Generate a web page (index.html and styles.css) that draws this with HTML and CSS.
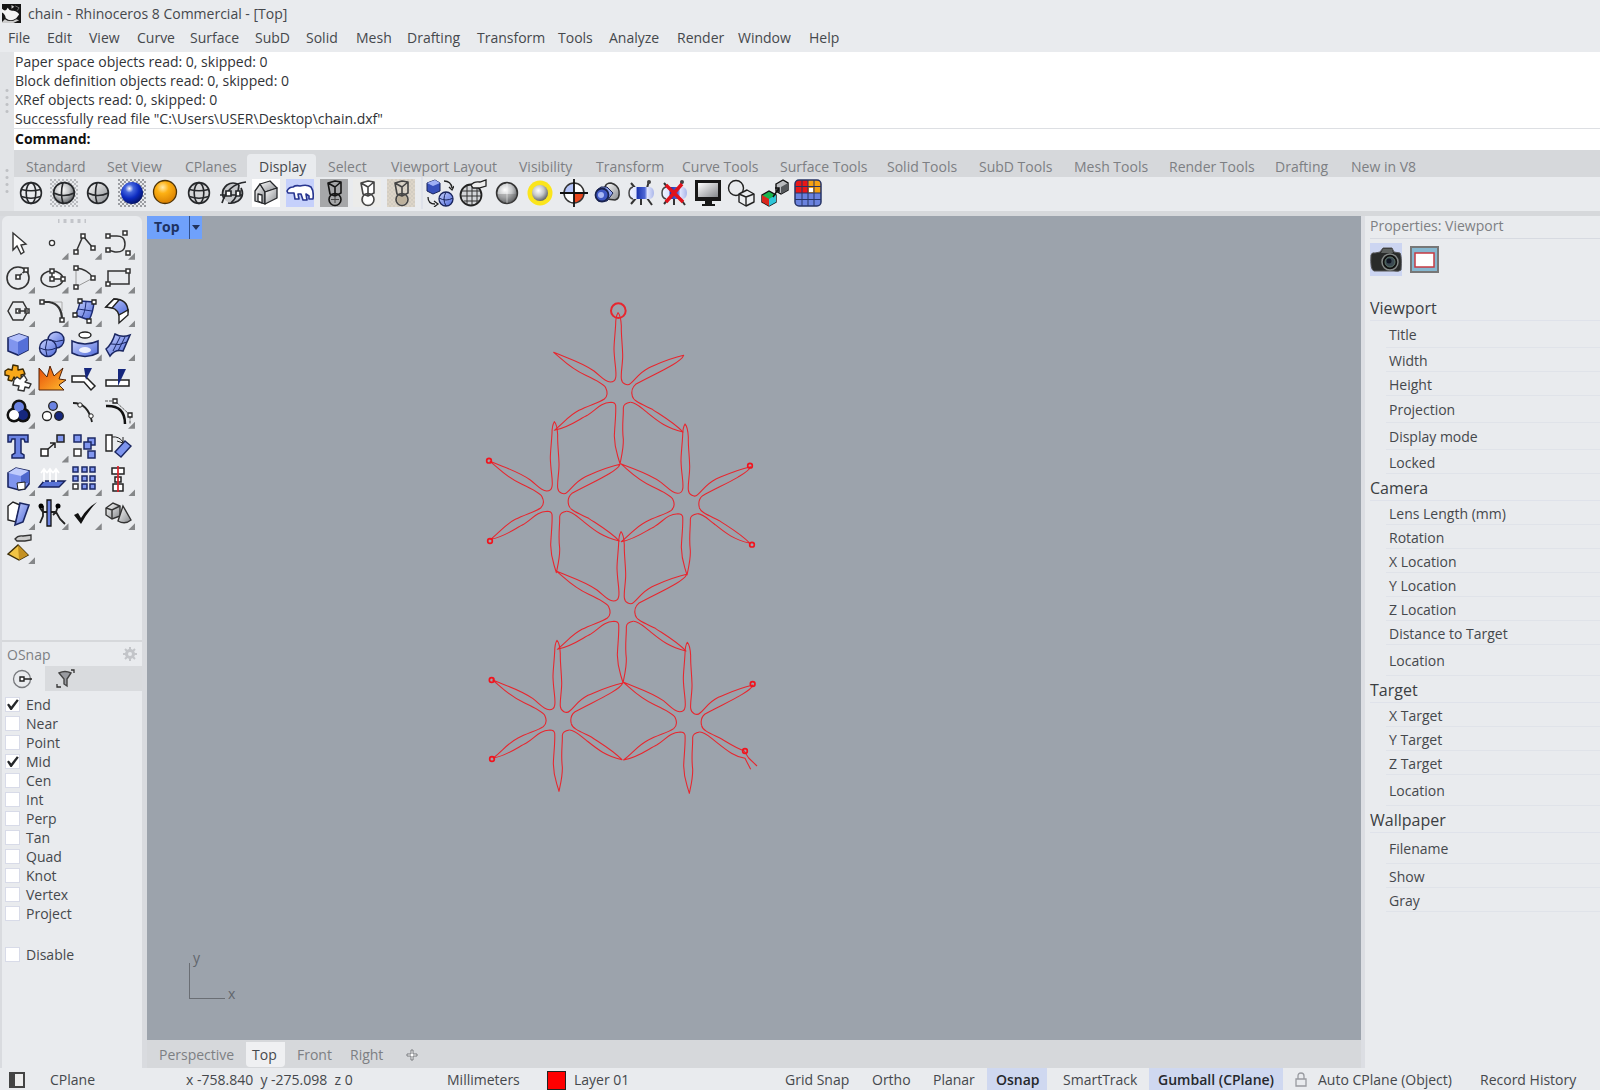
FILE: index.html
```html
<!DOCTYPE html>
<html lang="en">
<head>
<meta charset="utf-8">
<title>chain - Rhinoceros 8 Commercial - [Top]</title>
<link rel="stylesheet" href="styles.css">
</head>
<body>
<svg class="defs" aria-hidden="true">
  <defs>
    <radialGradient id="g-gray" cx=".4" cy=".35" r=".7"><stop offset="0" stop-color="#fff"/><stop offset=".5" stop-color="#c4c6c8"/><stop offset="1" stop-color="#55585c"/></radialGradient>
    <radialGradient id="g-blue" cx=".38" cy=".3" r=".75"><stop offset="0" stop-color="#fff"/><stop offset=".25" stop-color="#4566dd"/><stop offset=".6" stop-color="#0c2abf"/><stop offset="1" stop-color="#04105c"/></radialGradient>
    <radialGradient id="g-orange" cx=".4" cy=".3" r=".75"><stop offset="0" stop-color="#ffe9a8"/><stop offset=".35" stop-color="#fdb114"/><stop offset="1" stop-color="#d67c00"/></radialGradient>
    <linearGradient id="g-soft" x1="0" y1="0" x2="1" y2="1"><stop offset="0" stop-color="#c8d2ff"/><stop offset="1" stop-color="#4d68d8"/></linearGradient>
    <linearGradient id="g-steel" x1="0" y1="0" x2="1" y2="1"><stop offset="0" stop-color="#fff"/><stop offset="1" stop-color="#85888c"/></linearGradient>
    <linearGradient id="g-fire" x1="0" y1="0" x2="1" y2="1"><stop offset="0" stop-color="#e84a08"/><stop offset="1" stop-color="#ffbd2e"/></linearGradient>
    <linearGradient id="g-lens" x1="0" y1="0" x2="1" y2="0"><stop offset="0" stop-color="#f4f6ff"/><stop offset=".3" stop-color="#dfe5ff"/><stop offset=".36" stop-color="#1c35b0"/><stop offset=".65" stop-color="#4e67d6"/><stop offset=".75" stop-color="#dfe4fc"/><stop offset="1" stop-color="#aab6ea"/></linearGradient>
    <pattern id="p-dots" width="4" height="4" patternUnits="userSpaceOnUse"><path d="M0 0H2V2H0ZM2 2H4V4H2Z" fill="#9b9da2"/></pattern>
    <g id="globe" fill="none" stroke="#26282b" stroke-width="1.6"><circle cx="14" cy="14" r="10.4"/><ellipse cx="14" cy="14" rx="4.8" ry="10.4"/><path d="M4.5 10.5Q14 13 23.500 10.500M4.500 17.500Q14 21 23.500 17.500"/></g>
    <g id="cross" fill="none" stroke="#26282b" stroke-width="1.6"><circle cx="14" cy="14" r="10.400"/><path d="M13 3.700Q10 14 13 24.300M3.700 14Q14 19 24.300 14"/></g>
    <g id="pen" fill="none" stroke-linejoin="round" stroke-width="1.600"><path d="M8 4L15 2L21 3L15 8Z M8 4L10 15L15 17L21 14V3 M15 8V16"/><circle cx="15" cy="20.500" r="6"/></g>
    <g id="cam"><path d="M9 10L4 4M20 9L22 2M9 19L4 25M20 19L25 26M14 20V26" stroke="#333" stroke-width="2"/><path d="M5 8H23Q27 9 27 14T23 20H5Q1 19 1 14T5 8Z" fill="url(#g-lens)"/><path d="M6 8Q2 9 2 14T6 20" fill="none" stroke="#444" stroke-width="1.500"/><circle cx="22" cy="3" r="2" fill="#444"/></g>

    <path id="star-body" d="M40 10C36 -5 38 -15 50 -25C80 -42 130 -65 155 -80C175 -92 190 -100 194 -112C150 -102 130 -92 90 -75C60 -60 50 -40 35 -28C25 -18 8 -28 7 -42C5 -60 12 -90 11 -115C10 -150 6 -175 7 -200C6 -220 2 -235 -3 -240C-8 -232 -10 -225 -10 -205C-12 -170 -15 -150 -15 -130C-14 -90 -6 -60 -10 -45Q-12 -32 -26 -32C-45 -34 -55 -50 -75 -65C-110 -90 -140 -98 -196 -121C-170 -100 -150 -75 -100 -52C-70 -38 -45 -25 -40 -15C-34 -3 -34 10 -44 19C-60 30 -90 38 -120 53C-150 68 -165 90 -194 113C-150 105 -120 80 -95 68C-65 50 -60 32 -24 29Q-12 29 -10 38C-8 60 -13 100 -14 130C-13 170 -8 175 3 213C10 180 14 165 13 140C8 100 14 70 13 45Q14 32 34 29"/>
    <g id="star"><use href="#star-body"/><path d="M34 29C50 28 65 45 85 60C120 88 140 105 192 118C165 90 130 70 100 50C70 35 42 25 40 10"/></g>
  </defs>
</svg>

<div class="app">
  <header class="title-bar">
    <svg class="logo" viewBox="0 0 20 20"><rect width="20" height="20" fill="#151515"/><path d="M0 5Q4 9 6 4Q8 8 12 7Q17 8 18 11L15 15Q9 19 4 15Q3 10 0 9Z" fill="#f2f2f2"/><path d="M3 16L0 19V20H12L18 17L15 16Q9 20 3 16M10 1L13 3L10 5Z" fill="#ccc"/><path d="M14 2L18 4L16 7" fill="none" stroke="#777"/></svg>
    <h1>chain - Rhinoceros 8 Commercial - [Top]</h1>
  </header>

  <nav class="menu-bar" aria-label="Main menu">
    <button>File</button><button>Edit</button><button>View</button><button>Curve</button><button>Surface</button><button>SubD</button><button>Solid</button><button>Mesh</button><button>Drafting</button><button>Transform</button><button>Tools</button><button>Analyze</button><button>Render</button><button>Window</button><button>Help</button>
  </nav>

  <section class="command" aria-label="Command history">
    <div class="grip"></div>
    <div class="command-body">
      <div class="history">
        <p>Paper space objects read: 0, skipped: 0</p>
        <p>Block definition objects read: 0, skipped: 0</p>
        <p>XRef objects read: 0, skipped: 0</p>
        <p>Successfully read file "C:\Users\USER\Desktop\chain.dxf"</p>
      </div>
      <div class="prompt"><label for="cmd">Command:</label><input id="cmd" type="text"></div>
    </div>
  </section>

  <section class="ribbon">
    <div class="grip"></div>
    <div class="ribbon-body">
      <div class="ribbon-tabs">
        <button>Standard</button><button>Set View</button><button>CPlanes</button><button class="active">Display</button><button>Select</button><button>Viewport Layout</button><button>Visibility</button><button>Transform</button><button>Curve Tools</button><button>Surface Tools</button><button>Solid Tools</button><button>SubD Tools</button><button>Mesh Tools</button><button>Render Tools</button><button>Drafting</button><button>New in V8</button>
      </div>
      <div class="ribbon-tools">
        <div class="tool-group">
          <button aria-label="Wireframe"><svg viewBox="0 0 28 28"><use href="#globe"/></svg></button>
          <button aria-label="Shaded"><svg viewBox="0 0 28 28"><rect width="28" height="28" fill="url(#p-dots)" opacity=".6"/><circle cx="14" cy="14" r="10.400" fill="url(#g-gray)"/><use href="#cross"/></svg></button>
          <button aria-label="Shaded selected"><svg viewBox="0 0 28 28"><circle cx="14" cy="14" r="10.400" fill="url(#g-steel)"/><use href="#cross"/></svg></button>
          <button aria-label="Rendered"><svg viewBox="0 0 28 28"><rect width="28" height="28" fill="url(#p-dots)"/><circle cx="14" cy="14" r="11" fill="url(#g-blue)"/></svg></button>
          <button aria-label="Raytraced"><svg viewBox="0 0 28 28"><circle cx="14" cy="13" r="11.500" fill="url(#g-orange)" stroke="#4b3208" stroke-width="1.300"/></svg></button>
          <button aria-label="Ghosted"><svg viewBox="0 0 28 28"><circle cx="14" cy="14" r="11" fill="#d6d7d9"/><use href="#globe"/></svg></button>
          <button aria-label="X-Ray"><svg viewBox="0 0 28 28"><circle cx="13" cy="14" r="10" fill="#c5c7ca"/><g fill="none" stroke="#26282b" stroke-width="1.700"><path d="M5 20Q1 12 8 6Q14 2 20 6M22 9Q26 17 19 22Q14 25 9 24"/><path d="M1 16H24M3 24Q9 5 27 3M12 24Q19 18 20 6"/><path d="M7 12h5v5H7zM17 12h4v5h-4z" fill="#fff"/></g></svg></button>
          <button aria-label="Technical" class="tone-white"><svg viewBox="0 0 28 28"><g fill="url(#g-steel)" stroke="#26282b" stroke-width="1.300" stroke-linejoin="round"><path d="M3 12L8 5L13 13V25L3 22Z"/><path d="M8 5L18 2L25 9L13 13Z"/><path d="M13 13L25 9V19L13 25Z"/><path d="M6 15L10 16V24L6 22Z" fill="#fff"/></g></svg></button>
          <button aria-label="Arctic" class="tone-ice"><svg viewBox="0 0 28 28"><path d="M1 12Q3 8 7 8Q10 6 14 7Q21 5 25 8Q28 12 27 20H23L23 17L20 15L21 21H17L15 15L12 15L13 20H9L8 14L2 14Z" fill="#fff" stroke="#27358f" stroke-width="1.600" stroke-linejoin="round"/></svg></button>
          <button aria-label="Pen" class="tone-gray"><svg viewBox="0 0 28 28"><use href="#pen" stroke="#151515"/><path d="M11 20.500H19M15 17V24" stroke="#444"/></svg></button>
          <button aria-label="Monochrome" class="tone-paper"><svg viewBox="0 0 28 28"><path d="M8 4L15 2L21 3V14L20 24L12 25L10 15Z" fill="#fff"/><use href="#pen" stroke="#444"/></svg></button>
          <button aria-label="Artistic" class="tone-sand"><svg viewBox="0 0 28 28"><rect width="28" height="28" fill="url(#p-dots)" opacity=".15"/><circle cx="15" cy="20.500" r="5" fill="#bdb19c"/><use href="#pen" stroke="#444"/></svg></button>
        </div>
        <div class="tool-group second">
          <button aria-label="Synchronize views"><svg viewBox="0 0 28 28"><path d="M1 4L9 1L14 4V12L7 15L1 12Z" fill="#3851bb" stroke="#18245c"/><path d="M1 4L9 1L14 4L7 7Z" fill="#9fb0f5"/><circle cx="20" cy="20" r="7" fill="url(#g-soft)" stroke="#18245c" stroke-width="1.300"/><path d="M13 19Q20 23 27 19M20 13Q16 20 20 27" stroke="#18245c" fill="none"/><path d="M18 2Q25 2 26 9M23 8L26 11L28 7M2 18Q2 25 9 25M8 22L12 25L8 28" fill="none" stroke="#222" stroke-width="1.300"/></svg></button>
          <button aria-label="Display options"><svg viewBox="0 0 28 28"><circle cx="12" cy="16" r="10.500" fill="#d3d5d8" stroke="#222" stroke-width="1.800"/><path d="M3 12H21M2 17H22M5 22H20M8 7V25M13 6V26M18 8V24" stroke="#333" fill="none"/><path d="M12 6Q15 2 21 3L27 1V7L20 9L14 9Z" fill="#eee" stroke="#222" stroke-width="1.300"/></svg></button>
          <button aria-label="Flat shade"><svg viewBox="0 0 28 28"><circle cx="14" cy="14" r="10.400" fill="url(#g-gray)" stroke="#333" stroke-width="1.600"/><path d="M4 15H24V14A10 10 0 0 1 4 15" fill="#666" opacity=".35"/><path d="M14 4V24" stroke="#fff" opacity=".5"/></svg></button>
          <button aria-label="Shade selected"><svg viewBox="0 0 28 28"><circle cx="14" cy="14" r="12.500" fill="#fbe51c"/><circle cx="14" cy="14" r="8" fill="url(#g-gray)"/></svg></button>
          <button aria-label="Clipping plane"><svg viewBox="0 0 28 28"><circle cx="14" cy="14" r="10" fill="#fff"/><path d="M14 14V4A10 10 0 0 0 4 14Z" fill="#b4c5fb"/><path d="M14 14V24A10 10 0 0 0 24 14Z" fill="#e9461d"/><circle cx="14" cy="14" r="10" fill="none" stroke="#333" stroke-width="1.500"/><path d="M14 0V28M0 14H28" stroke="#111" stroke-width="1.800"/></svg></button>
          <button aria-label="Capture"><svg viewBox="0 0 28 28"><path d="M12 8Q13 4 18 4Q25 6 26 12Q27 20 22 21L14 20Z" fill="url(#g-steel)" stroke="#333" stroke-width="1.500"/><path d="M4 11L8 8H14L20 14L14 22L5 22Z" fill="#8ea1ee" stroke="#19234f"/><circle cx="9" cy="16" r="6.500" fill="#3e57c4" stroke="#19234f" stroke-width="1.800"/><circle cx="8" cy="16" r="3" fill="#a9b8f6"/></svg></button>
          <button aria-label="Show camera"><svg viewBox="0 0 28 28"><use href="#cam"/></svg></button>
          <button aria-label="Hide camera"><svg viewBox="0 0 28 28"><use href="#cam"/><path d="M6 6L23 23M22 5L6 23" stroke="#e0121b" stroke-width="3.500"/></svg></button>
          <button aria-label="Full screen"><svg viewBox="0 0 28 28"><path d="M1 1H27V22H18V25H21V27H8V25H11V22H1Z" fill="#171717"/><rect x="4" y="4" width="20" height="14" fill="url(#g-steel)"/></svg></button>
          <button aria-label="Object display mode"><svg viewBox="0 0 28 28"><g fill="none" stroke="#222" stroke-width="1.400" stroke-linejoin="round"><circle cx="9" cy="9" r="7.500"/><path d="M12 15L20 11L27 15V23L19 27L12 23Z" fill="#eceef0"/><path d="M12 15L19 18L27 15M19 18V27"/></g></svg></button>
          <button aria-label="Match display"><svg viewBox="0 0 28 28"><path d="M15 5L22 1L27 4V11L20 15L15 12Z" fill="#b9bbbe" stroke="#111" stroke-width="1.400"/><path d="M20 8L27 4V11L20 15Z" fill="#55585b"/><path d="M1 16L8 12L15 16V23L8 27L1 23Z" fill="#19b64f" stroke="#111" stroke-width="1.400"/><path d="M1 16L8 20V27L1 23Z" fill="#d9271c"/><path d="M8 20L15 16V23L8 27Z" fill="#2fc5d8"/><path d="M12 18L18 9M14 9H18V13" fill="none" stroke="#111" stroke-width="1.500"/></svg></button>
          <button aria-label="Face colors"><svg viewBox="0 0 28 28"><rect x="1" y="1" width="26" height="26" rx="4" fill="#6a82de"/><path d="M14 1H23Q27 1 27 5V14H14Z" fill="#f5a111"/><path d="M14 1H5Q1 1 1 5V14H14Z" fill="#ea1717"/><path d="M8 1V27M14 1V27M20 1V27M1 7.500H27M1 14H27M1 20.500H27" stroke="#273465"/><rect x="15" y="9" width="4" height="4" fill="#fff"/><rect x="1" y="1" width="26" height="26" rx="4" fill="none" stroke="#273465" stroke-width="1.500"/></svg></button>
        </div>
      </div>
    </div>
  </section>

  <main class="workspace">
    <aside class="sidebar">
      <section class="palette-panel" aria-label="Tools">
        <div class="grip-row"></div>
        <div class="palette">
          <button class="plain" aria-label="Select"><svg viewBox="0 0 30 30"><path d="M9 5V22L13 18L17 26L20 24L17 17L22 16Z" fill="#fff" stroke="#333" stroke-width="1.400"/></svg></button>
          <button aria-label="Point"><svg viewBox="0 0 30 30"><circle cx="15" cy="15" r="2.600" fill="#fff" stroke="#333" stroke-width="1.300"/></svg></button>
          <button aria-label="Polyline"><svg viewBox="0 0 30 30"><g fill="#fff" stroke="#333" stroke-width="1.500"><path d="M6 24L13 8L23 20" fill="none"/><path d="M11 6h4v4h-4zM4 22h4v4H4zM21 18h4v4h-4z"/></g></svg></button>
          <button aria-label="Curve"><svg viewBox="0 0 30 30"><g fill="#fff" stroke="#333" stroke-width="1.500"><path d="M5 8H12Q22 7 22 16T12 24L5 22" fill="none"/><path d="M3 6h4v4H3zM3 20h4v4H3zM20 3h4v4h-4zM23 23h4v4h-4z"/></g></svg></button>
          <button aria-label="Circle"><svg viewBox="0 0 30 30"><g fill="#fff" stroke="#333" stroke-width="1.600"><circle cx="14" cy="16" r="11" fill="none"/><path d="M14 15L22 8" stroke-dasharray="2 1"/><path d="M12 13h4v4h-4zM20 6h4v4h-4z"/></g></svg></button>
          <button aria-label="Ellipse"><svg viewBox="0 0 30 30"><g fill="#fff" stroke="#333" stroke-width="1.500"><ellipse cx="15" cy="17" rx="11" ry="8" fill="none"/><path d="M15 9V17H26"/><path d="M13 7h4v4h-4zM13 15h4v4h-4zM24 15h4v4h-4z"/></g></svg></button>
          <button aria-label="Arc"><svg viewBox="0 0 30 30"><g fill="#fff" stroke="#333" stroke-width="1.500"><path d="M6 6Q18 7 23 16" fill="none"/><path d="M6 6V25L23 16" fill="none" stroke="#999" stroke-width="1"/><path d="M4 4h4v4H4zM4 23h4v4H4zM21 14h4v4h-4z"/></g></svg></button>
          <button aria-label="Rectangle"><svg viewBox="0 0 30 30"><g fill="#fff" stroke="#333" stroke-width="1.500"><path d="M5 9H26V22H5Z" fill="none"/><path d="M3 20h4v4H3zM23 7h4v4h-4z"/></g></svg></button>
          <button aria-label="Polygon"><svg viewBox="0 0 30 30"><g fill="#fff" stroke="#333" stroke-width="1.500"><path d="M4 16L9 7H19L24 16L19 25H9Z" fill="none"/><path d="M14 16H24M12 14h4v4h-4zM21 14h4v4h-4z"/></g></svg></button>
          <button aria-label="Fillet curves"><svg viewBox="0 0 30 30"><path d="M15 7H25V16" stroke="#aaa" fill="none"/><g fill="#fff" stroke="#333" stroke-width="1.500"><path d="M5 7H12Q25 9 25 25" fill="none" stroke-width="2.200"/><path d="M3 5h4v4H3zM23 23h4v4h-4z"/></g></svg></button>
          <button aria-label="Surface from points"><svg viewBox="0 0 30 30"><path d="M10 6L24 7Q23 18 19 25L5 20Q9 14 10 6Z" fill="url(#g-soft)" stroke="#1c2b73" stroke-width="1.500"/><path d="M16 7Q15 18 12 22M8 14L22 16" stroke="#1c2b73" fill="none"/><path d="M8 4h4v4H8zM22 5h4v4h-4zM3 18h4v4H3zM17 24h4v4h-4z" fill="#fff" stroke="#222" stroke-width="1.300"/></svg></button>
          <button aria-label="Fillet surface"><svg viewBox="0 0 30 30"><path d="M11 4Q25 4 25 17L16 20Q14 12 3 12Z" fill="url(#g-soft)" stroke="#222" stroke-width="1.500"/><path d="M3 12L11 4Q14 4 16 5L9 13Z" fill="#fff" stroke="#222" stroke-width="1.400"/><path d="M16 20L25 15V20L16 28Z" fill="#fff" stroke="#222" stroke-width="1.400"/></svg></button>
          <button aria-label="Box"><svg viewBox="0 0 30 30"><path d="M4 9L15 5L24 8V21L14 26L4 22Z" fill="#8095ee" stroke="#1a2661" stroke-width="1.600"/><path d="M4 9L15 5L24 8L14 13Z" fill="#b5c2fb"/><path d="M14 13L24 8V21L14 26Z" fill="#5570d8"/></svg></button>
          <button aria-label="Sphere"><svg viewBox="0 0 30 30"><g fill="url(#g-soft)" stroke="#1a2661" stroke-width="1.400"><circle cx="19" cy="11" r="8"/><circle cx="11" cy="19" r="8.500"/><path d="M3 19Q11 23 19 19M10 11Q7 19 10 27M12 11Q19 14 27 11" fill="none" stroke-width="1"/></g></svg></button>
          <button aria-label="Revolve"><svg viewBox="0 0 30 30"><ellipse cx="15" cy="6" rx="6" ry="3" fill="#fff" stroke="#222" stroke-width="1.400"/><path d="M2 12Q15 18 28 12V24Q15 31 2 24Z" fill="url(#g-soft)" stroke="#1a2661" stroke-width="1.500"/><ellipse cx="15" cy="21" rx="6" ry="3" fill="#fff" opacity=".85"/></svg></button>
          <button aria-label="Patch"><svg viewBox="0 0 30 30"><path d="M12 5Q19 9 27 6L20 22Q12 20 7 27L3 20Q9 15 12 5Z" fill="url(#g-soft)" stroke="#1a2661" stroke-width="1.500"/><path d="M8 15Q16 17 24 13M17 8L10 22M22 8L15 22" stroke="#1a2661" fill="none"/></svg></button>
          <button aria-label="Plugins"><svg viewBox="0 0 30 30"><path d="M4 6L8 7L9 2L14 3L14 7L19 6L21 11L17 12L18 17L12 17L10 14L8 18L4 17L5 13L1 12L1 8Z" fill="#f9a91a" stroke="#3c2a05" stroke-width="1.400" stroke-linejoin="round"/><path d="M13 14L16 16L20 12L23 17L21 19L27 21L25 25L21 24L20 28L14 27L15 23L9 22L10 17Z" fill="#fff" stroke="#333" stroke-width="1.400" stroke-linejoin="round"/></svg></button>
          <button class="plain" aria-label="Explode"><svg viewBox="0 0 30 30"><path d="M2 5L10 14L13 3L17 13L26 5L22 16L29 17L22 22L27 27H2Z" fill="url(#g-fire)" stroke="#50230a"/></svg></button>
          <button class="plain" aria-label="Trim"><svg viewBox="0 0 30 30"><path d="M2 13H15L19 17L25 23L21 27L14 19H2Z" fill="#fff" stroke="#222" stroke-width="1.500"/><path d="M14 5H22L16 17Z" fill="#16277d"/></svg></button>
          <button class="plain" aria-label="Split"><svg viewBox="0 0 30 30"><path d="M3 17H26V23H3Z" fill="#fff" stroke="#222" stroke-width="1.500"/><path d="M15 6H23L15 23Z" fill="#16277d"/></svg></button>
          <button aria-label="Boolean union"><svg viewBox="0 0 30 30"><g fill="#111"><circle cx="15" cy="10" r="7.500"/><circle cx="10" cy="18" r="7.500"/><circle cx="19" cy="18" r="7.500"/></g><circle cx="15" cy="10" r="5" fill="#6b83e3"/><circle cx="19" cy="18" r="5" fill="#16277d"/><circle cx="10" cy="18" r="5" fill="#fff"/></svg></button>
          <button class="plain" aria-label="Group"><svg viewBox="0 0 30 30"><g stroke="#222" stroke-width="1.300"><circle cx="16" cy="9" r="4.300" fill="#6b83e3"/><circle cx="10" cy="19" r="4.500" fill="#fff"/><circle cx="22" cy="19" r="4.300" fill="#16277d"/></g></svg></button>
          <button class="plain" aria-label="Edit points"><svg viewBox="0 0 30 30"><path d="M3 6Q18 6 22 25" fill="none" stroke="#222" stroke-width="1.800"/><g fill="#fff" stroke="#222"><circle cx="10" cy="8" r="2.200"/><circle cx="21" cy="19" r="2.200"/></g></svg></button>
          <button aria-label="Control points"><svg viewBox="0 0 30 30"><path d="M3 9Q22 8 22 27" fill="none" stroke="#111" stroke-width="2.500"/><path d="M2 4H12L27 18V27" fill="none" stroke="#555" stroke-dasharray="3 1"/><path d="M10 2h4v4h-4zM25 16h4v4h-4z" fill="#fff" stroke="#222" stroke-width="1.300"/></svg></button>
          <button class="plain" aria-label="Text"><svg viewBox="0 0 30 30"><path d="M4 4H24V11H21L20 8H17V22L20 24V27H8V24L11 22V8H8L7 11H4Z" fill="#6b83e3" stroke="#1a2661" stroke-width="1.500"/></svg></button>
          <button aria-label="Move"><svg viewBox="0 0 30 30"><g stroke="#222" stroke-width="1.500"><path d="M4 18h7v7H4z" fill="#fff"/><path d="M20 4h7v7h-7z" fill="#8197f0"/><path d="M11 18L18 12M13 12H18V17" fill="none"/></g></svg></button>
          <button class="plain" aria-label="Copy"><svg viewBox="0 0 30 30"><g stroke="#1d2a66" stroke-width="1.500" fill="#8197f0"><path d="M4 4h7v7H4z"/><path d="M18 7h7v7h-7z"/><path d="M14 11h7v7h-7z"/><path d="M18 20h7v7h-7z"/><path d="M4 18h7v7H4z" fill="#fff" stroke="#333"/></g></svg></button>
          <button class="plain" aria-label="Rotate"><svg viewBox="0 0 30 30"><path d="M3 4h6v16H3z" fill="#fff" stroke="#222" stroke-width="1.400"/><path d="M22 10L28 15L18 26L12 21Z" fill="#7d94ee" stroke="#1a2661" stroke-width="1.400"/><path d="M9 6Q16 5 20 11M14 10L20 12L20 6" fill="none" stroke="#222"/></svg></button>
          <button aria-label="Boolean difference"><svg viewBox="0 0 30 30"><path d="M4 9L12 4L25 7V20L21 25L15 26L4 23Z" fill="#8095ee" stroke="#1a2661" stroke-width="1.600"/><path d="M4 9L12 4L25 7L17 12Z" fill="#c0ccfc"/><path d="M17 12L25 7V19H17Z" fill="#4d67cc"/><path d="M13 19L21 18V25L14 26Z" fill="#fff" stroke="#222"/></svg></button>
          <button aria-label="Extrude"><svg viewBox="0 0 30 30"><path d="M7 17H28L22 23H2Z" fill="#5872d6" stroke="#16215b" stroke-width="1.400"/><path d="M7 18V7M13 18V7M19 18V7M4 9L7 5L10 9M10 9L13 5L16 9M16 9L19 5L22 9" fill="none" stroke="#fff" stroke-width="1.700"/></svg></button>
          <button aria-label="Array"><svg viewBox="0 0 30 30"><path d="M3 3h5v5H3zM12 3h5v5h-5zM20 3h5v5h-5zM3 12h5v5H3zM12 12h5v5h-5zM20 12h5v5h-5zM12 20h5v5h-5zM20 20h5v5h-5z" fill="#8197f0" stroke="#1d2a66" stroke-width="1.500"/><path d="M3 20h5v5H3z" fill="#fff" stroke="#333" stroke-width="1.500"/></svg></button>
          <button aria-label="Align"><svg viewBox="0 0 30 30"><path d="M9 4h12v6H9zM12 13h6v5h-6zM10 20h10v7H10z" fill="#fff" stroke="#222" stroke-width="1.500"/><path d="M15 2V28" stroke="#dc1f28" stroke-width="1.700"/></svg></button>
          <button aria-label="Thickness"><svg viewBox="0 0 30 30"><path d="M4 8L9 4L16 7L12 24L4 22Z" fill="#fff" stroke="#222" stroke-width="1.400"/><path d="M16 5L25 7L19 24L11 27Z" fill="url(#g-soft)" stroke="#1a2661" stroke-width="1.600"/></svg></button>
          <button aria-label="Analyze"><svg viewBox="0 0 30 30"><path d="M3 10L6 14H19L23 21L28 26M6 8V18L3 25M21 8L19 14L16 17" stroke="#222" fill="none" stroke-width="1.800"/><circle cx="4" cy="8" r="2.500"/><circle cx="21" cy="8" r="2.500"/><path d="M10 2h4v26h-4z" fill="#6b83e3" stroke="#111" stroke-width="1.300"/></svg></button>
          <button aria-label="Check"><svg viewBox="0 0 30 30"><path d="M4 17L8 15L11 20Q17 10 27 4Q18 13 11 26Z" fill="#111"/></svg></button>
          <button aria-label="Solids"><svg viewBox="0 0 30 30"><g fill="url(#g-steel)" stroke="#333" stroke-width="1.400"><path d="M3 10L10 5L17 8V18L9 21L3 17Z"/><path d="M3 10L9 12L17 8M9 12V21" fill="none"/><path d="M20 8L28 22Q22 27 15 23Z"/></g></svg></button>
          <button aria-label="Render material"><svg viewBox="0 0 30 30"><path d="M11 7Q14 3 19 4L27 3V8L21 9H13Z" fill="#ccc" stroke="#333" stroke-width="1.300"/><path d="M4 22L14 13L24 23L15 28Z" fill="#f1c445" stroke="#3d2e08" stroke-width="1.400"/><path d="M14 13L15 28L24 23Z" fill="#c39021"/></svg></button>
        </div>
      </section>

      <section class="osnap">
        <header><h2>OSnap</h2><button aria-label="OSnap settings"><svg viewBox="0 0 14 14"><circle cx="7" cy="7" r="3.500" fill="none" stroke="#c3c5c9" stroke-width="3"/><path d="M7 0V3M7 11V14M0 7H3M11 7H14M2 2L4 4M10 10L12 12M12 2L10 4M4 10L2 12" stroke="#c3c5c9" stroke-width="2"/></svg></button></header>
        <div class="osnap-tabs">
          <button class="active" aria-label="Snaps"><svg viewBox="0 0 22 20"><circle cx="10" cy="10" r="8.500" fill="none" stroke="#77797d" stroke-width="1.300"/><path d="M8 8h4v4H8zM12 10H20" fill="#fff" stroke="#222" stroke-width="1.400"/></svg></button>
          <button aria-label="Filters"><svg viewBox="0 0 22 20"><path d="M4 4Q10 1 16 4L12 10V17L9 15V10Z" fill="#999ba0" stroke="#444" stroke-width="1.400"/><path d="M16 1H19V4M2 15V18H6" fill="none" stroke="#333" stroke-width="1.300"/></svg></button>
        </div>
        <div class="snap-list">
          <label><input type="checkbox" checked>End</label>
          <label><input type="checkbox">Near</label>
          <label><input type="checkbox">Point</label>
          <label><input type="checkbox" checked>Mid</label>
          <label><input type="checkbox">Cen</label>
          <label><input type="checkbox">Int</label>
          <label><input type="checkbox">Perp</label>
          <label><input type="checkbox">Tan</label>
          <label><input type="checkbox">Quad</label>
          <label><input type="checkbox">Knot</label>
          <label><input type="checkbox">Vertex</label>
          <label><input type="checkbox">Project</label>
          <label class="disable"><input type="checkbox">Disable</label>
        </div>
      </section>
    </aside>

    <section class="viewport-column">
      <div class="viewport">
        <svg class="drawing" role="img" aria-label="Chain curves">
          <g transform="translate(323 74) scale(.3333333)" fill="none" stroke="#e8262e" stroke-width="3.200" stroke-linejoin="round">
            <use href="#star" x="447" y="308"/>
            <use href="#star" x="256" y="635"/>
            <use href="#star" x="648" y="642"/>
            <use href="#star" x="456" y="965"/>
            <use href="#star" x="264" y="1291"/>
            <use href="#star-body" x="655" y="1297"/>
            <path d="M689 1326C705 1325 720 1342 740 1357C775 1385 795 1400 825 1405L842 1438M695 1307C697 1322 725 1332 755 1347C785 1365 800 1375 822 1382L836 1404L861 1428"/>
            <circle cx="445" cy="62" r="22" stroke-width="6"/>
            <g stroke-width="5" stroke="#f2131d"><circle cx="57" cy="512" r="7"/><circle cx="60" cy="753" r="7"/><circle cx="840" cy="527" r="7"/><circle cx="846" cy="764" r="7"/><circle cx="65" cy="1170" r="7"/><circle cx="66" cy="1407" r="7"/><circle cx="848" cy="1182" r="7"/><circle cx="825" cy="1383" r="7"/></g>
          </g>
        </svg>
        <div class="view-title"><span>Top</span><button aria-label="Viewport menu"></button></div>
        <div class="axis"><span class="axis-y">y</span><span class="axis-x">x</span></div>
      </div>
      <nav class="view-tabs" aria-label="Viewports">
        <button>Perspective</button><button class="active">Top</button><button>Front</button><button>Right</button><button aria-label="New viewport"><svg viewBox="0 0 12 12"><path d="M5 1H7V5H11V7H7V11H5V7H1V5H5Z" fill="#fff" stroke="#77797d"/></svg></button>
      </nav>
    </section>

    <aside class="properties">
      <h2>Properties: Viewport</h2>
      <div class="prop-tabs">
        <button class="active" aria-label="Camera"><svg viewBox="0 0 32 32"><path d="M1 11Q2 8 5 9L10 8L13 4H22L24 8L30 9Q32 12 31 26Q29 28 24 27H4Q0 26 1 11Z" fill="#292b2a" stroke="#555"/><path d="M13 5H22L23 9H11Z" fill="#5e6260"/><circle cx="20" cy="18" r="8" fill="#111" stroke="#858a88" stroke-width="1.500"/><circle cx="20" cy="18" r="5" fill="#3c4a53" stroke="#5c7568"/><circle cx="19" cy="17" r="2.500" fill="#101522"/></svg></button>
        <button aria-label="Viewport frame"><svg viewBox="0 0 32 32"><rect x="2" y="3" width="27" height="25" fill="#86b8d0" stroke="#777" stroke-width="2"/><rect x="6" y="9" width="19" height="14" fill="#fff" stroke="#c63a42" stroke-width="1.500"/></svg></button>
      </div>
      <h3>Viewport</h3>
      <ul><li class="medium">Title</li><li>Width</li><li>Height</li><li class="medium">Projection</li><li class="medium">Display mode</li><li>Locked</li></ul>
      <h3>Camera</h3>
      <ul><li>Lens Length (mm)</li><li>Rotation</li><li>X Location</li><li>Y Location</li><li>Z Location</li><li>Distance to Target</li><li class="tall">Location</li></ul>
      <h3>Target</h3>
      <ul><li>X Target</li><li>Y Target</li><li>Z Target</li><li class="tall">Location</li></ul>
      <h3>Wallpaper</h3>
      <ul><li class="tall">Filename</li><li>Show</li><li>Gray</li></ul>
    </aside>
  </main>

  <footer class="status">
    <div class="status-left">
      <button aria-label="Toggle panels"><svg viewBox="0 0 18 18"><path d="M1 1H17V17H1Z" fill="#444"/><path d="M7 3H15V15H7Z" fill="#eee"/></svg></button>
      <button>CPlane</button>
      <span class="coords">x -758.840&nbsp; y -275.098&nbsp; z 0</span>
      <button>Millimeters</button>
      <button class="layer"><i></i>Layer 01</button>
    </div>
    <div class="status-right">
      <button>Grid Snap</button><button>Ortho</button><button>Planar</button><button class="on">Osnap</button><button class="smart">SmartTrack</button><button class="on">Gumball (CPlane)</button>
      <svg viewBox="0 0 12 16"><path d="M1 7H11V14H1ZM3 7V4Q3 1 6 1T9 4V7" fill="none" stroke="#999ba0" stroke-width="1.300"/></svg>
      <button>Auto CPlane (Object)</button><button>Record History</button>
    </div>
  </footer>
</div>
</body>
</html>
```
FILE: styles.css
```css
* { box-sizing: border-box; }

body {
  margin: 0;
  background: #e9ebee;
  color: #45484c;
  font: 14px/19px "Open Sans", "Noto Sans", sans-serif;
}

button {
  margin: 0;
  padding: 0;
  border: 0;
  background: none;
  color: inherit;
  font: inherit;
  text-align: left;
  white-space: nowrap;
}

h1, h2, h3, p, ul { margin: 0; padding: 0; font: inherit; }
ul { list-style: none; }
svg { display: block; }
.defs { position: absolute; width: 0; height: 0; }

.app { display: flex; flex-direction: column; min-height: 100vh; overflow: hidden; }

.title-bar { display: flex; align-items: center; gap: 7px; height: 26px; padding-left: 2px; }
.logo { width: 19px; height: 19px; }

.menu-bar {
  display: grid;
  grid-template-columns: 39px 42px 48px 53px 65px 51px 50px 51px 70px 81px 51px 68px 61px 71px auto;
  justify-content: start;
  height: 26px;
  padding: 0 0 3px 8px;
}

/* Command area */
.command, .ribbon { display: flex; }
.grip { display: flex; flex: none; align-items: center; width: 14px; padding-left: 5px; background: #e2e4e7; }
.grip::after {
  content: "";
  width: 4px;
  height: 28px;
  background: radial-gradient(circle, #bfc1c5 1px, transparent 2px) 0 0 / 4px 7px;
}
.command-body { flex: 1; background: #fff; color: #303236; }
.history { height: 77px; border-bottom: 1px solid #dddfe3; }
.history p { padding-left: 1px; }
.prompt { display: flex; height: 21px; padding-left: 1px; color: #111; font-weight: 700; line-height: 20px; }
.prompt input { flex: 1; border: 0; padding: 0 4px; background: none; font: inherit; outline: 0; }

/* Tab strip and display toolbar */
.ribbon { background: #d6d8db; border-bottom: 5px solid #d6d8db; }
.ribbon-body { flex: 1; }
.ribbon-tabs {
  display: grid;
  grid-template-columns: 81px 78px 74px 69px 63px 128px 77px 86px 98px 107px 92px 95px 95px 106px 76px auto;
  justify-content: start;
  height: 27px;
  padding: 4px 0 0;
  color: #7d7f83;
}
.ribbon-tabs button { padding: 2px 0 0 12px; }
.ribbon-tabs .active { background: #e9ebee; border-radius: 4px 4px 0 0; color: #45484c; }
.ribbon-tools { display: flex; height: 34px; padding-bottom: 2px; background: #e9ebee; }
.tool-group { display: grid; grid-template-columns: repeat(12, 1fr); width: 404px; align-items: center; justify-items: center; }
.second { margin-left: 3px; border-left: 2px solid #dfe2ea; }
.ribbon-tools svg { width: 28px; height: 28px; }
.tone-white { background: #fff; }
.tone-ice { background: #c5d0fb; }
.tone-gray { background: #a6a7a9; }
.tone-paper { background: #ececea; }
.tone-sand { background: #ddd5c8; }

/* Work area */
.workspace { flex: 1; display: flex; background: #d9dbdf; }
.sidebar { flex: none; display: flex; flex-direction: column; width: 147px; padding: 0 5px 0 2px; }
.palette-panel { height: 426px; border-bottom: 2px solid #d6d8db; background: #e9ebee; border-radius: 6px 6px 0 0; }
.grip-row { width: 28px; height: 10px; margin: 0 auto; background: radial-gradient(circle, #c3c5ca 2px, transparent 2px) center / 7px 10px; }
.palette { display: grid; grid-template-columns: repeat(4, 1fr); grid-template-rows: repeat(10, 1fr); width: 133px; height: 338px; }
.palette button { position: relative; display: grid; place-items: center; }
.palette svg { width: 30px; height: 30px; }
.palette button:not(.plain)::after {
  content: "";
  position: absolute;
  right: 0;
  bottom: 0;
  width: 7px;
  height: 7px;
  background: #858789;
  clip-path: polygon(100% 0, 100% 100%, 0 100%);
}

.osnap { flex: 1; background: #e9ebee; }
.osnap header { display: flex; justify-content: space-between; align-items: center; height: 24px; padding: 0 5px; color: #7d7f83; }
.osnap header svg { width: 14px; height: 14px; }
.osnap-tabs { display: flex; height: 25px; background: #d9dbde; }
.osnap-tabs button { width: 43px; padding-left: 10px; }
.osnap-tabs .active { background: #e9ebee; }
.osnap-tabs svg { width: 22px; height: 20px; }
.snap-list { display: flex; flex-direction: column; padding: 4px 3px; }
.snap-list label { display: flex; align-items: center; gap: 6px; height: 19px; }
.snap-list .disable { margin-top: 22px; }
.snap-list input {
  appearance: none;
  width: 15px;
  height: 15px;
  margin: 0;
  border: 1px solid #d8dbe8;
  background: #fff;
}
.snap-list input:checked::after {
  content: "";
  display: block;
  width: 13px;
  height: 13px;
  background: #26282b;
  clip-path: polygon(8% 52%, 22% 42%, 40% 66%, 84% 10%, 98% 20%, 44% 92%, 34% 92%);
}

.viewport-column { flex: 1; display: flex; flex-direction: column; min-width: 0; }
.viewport { flex: 1; position: relative; background: #9ca3ac; }
.drawing { position: absolute; inset: 0; width: 100%; height: 100%; }
.view-title { position: absolute; top: 0; left: 0; display: flex; height: 23px; background: #6fa1fb; color: #1e3261; font-weight: 700; line-height: 22px; }
.view-title span { width: 43px; padding-left: 7px; border-right: 1px solid #30508d; }
.view-title button { display: grid; place-items: center; width: 12px; }
.view-title button::after { content: ""; border: 4px solid transparent; border-top: 5px solid #22335c; border-bottom: 0; }
.axis { position: absolute; left: 42px; bottom: 41px; width: 36px; height: 36px; border: solid #6a6e74; border-width: 0 0 1px 1px; color: #62666c; }
.axis span { position: absolute; }
.axis-y { left: 3px; top: -15px; }
.axis-x { left: 38px; bottom: -5px; }

.view-tabs { display: flex; align-items: start; height: 28px; padding: 2px 0 0; color: #7d7f83; background: #d6d8db; }
.view-tabs button { height: 25px; padding: 0 6px; line-height: 25px; }
.view-tabs button:first-child { width: 99px; padding-left: 12px; }
.view-tabs .active { width: 39px; background: #eff0f2; border-radius: 0 0 4px 4px; color: #45484c; }
.view-tabs button:nth-child(3) { width: 59px; padding-left: 12px; }
.view-tabs button:nth-child(4) { width: 56px; }
.view-tabs svg { width: 12px; height: 12px; }

.properties { flex: none; width: 239px; padding-left: 5px; background: #e9ebee; border-left: 4px solid #dcdee3; }
.properties h2 { height: 23px; border-bottom: 1px solid #d7dae1; color: #7d7f83; }
.prop-tabs { display: flex; gap: 7px; height: 54px; padding: 4px 0 0; }
.prop-tabs button { width: 32px; height: 33px; }
.prop-tabs svg { width: 32px; height: 32px; }
.prop-tabs .active { background: #ccd5f1; }
.properties h3 { height: 28px; border-bottom: 1px solid #dfe2ea; font-size: 16px; line-height: 30px; color: #3b3e42; }
.properties li { height: 24px; margin-left: 16px; padding-left: 3px; border-bottom: 1px solid #e0e3e9; line-height: 25px; }
.properties .medium { height: 27px; line-height: 28px; }
.properties .tall { height: 31px; line-height: 31px; }
.properties ul { margin-bottom: -1px; }

/* Status bar */
.status { display: flex; justify-content: space-between; height: 22px; line-height: 24px; }
.status-left { display: grid; grid-template-columns: 42px 136px 261px 100px auto; align-items: center; padding-left: 8px; }
.status-left svg { width: 18px; height: 18px; }
.layer { display: flex; align-items: center; gap: 8px; }
.layer i { width: 19px; height: 19px; border: 1px solid #222; background: #f00; }
.status-right { display: grid; grid-template-columns: 87px 61px 54px 60px 102px 134px 35px 162px 120px; align-items: center; }
.status-right svg { width: 12px; height: 16px; margin-left: 12px; }
.status-right .on { padding-left: 9px; background: #cfd8f0; color: #26282c; font-weight: 600; }
.status-right .smart { padding-left: 16px; }
```
